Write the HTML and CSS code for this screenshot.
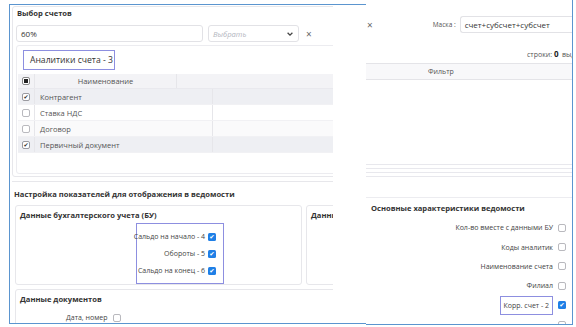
FILE: index.html
```html
<!DOCTYPE html>
<html lang="ru">
<head>
<meta charset="utf-8">
<link rel="stylesheet" href="styles.css">
</head>
<body>
<div class="canvas">
  <section class="shot-left">
    <div class="clip">
      <div class="card acct">
        <h3 class="title">Выбор счетов</h3>
        <div class="fields">
          <div class="input wide">60%</div>
          <div class="input select"><span class="ph">Выбрать</span>
            <svg class="chev" viewBox="0 0 10 10" width="8" height="8"><path d="M2 3.5 L5 6.5 L8 3.5" fill="none" stroke="#444" stroke-width="1.6"/></svg>
          </div>
          <span class="close">×</span>
        </div>
        <div class="tablebox">
          <div class="tag">Аналитики счета - 3</div>
          <div class="tbl">
            <div class="tr head">
              <div class="c-chk"><span class="cb cb-mixed"></span></div>
              <div class="c-name center">Наименование</div>
              <div class="c-rest"></div>
            </div>
            <div class="tr sel">
              <div class="c-chk"><span class="cb cb-on">✔</span></div>
              <div class="c-name2">Контрагент</div>
              <div class="c-rest2"></div>
            </div>
            <div class="tr">
              <div class="c-chk"><span class="cb"></span></div>
              <div class="c-name2">Ставка НДС</div>
              <div class="c-rest2"></div>
            </div>
            <div class="tr alt">
              <div class="c-chk"><span class="cb"></span></div>
              <div class="c-name2">Договор</div>
              <div class="c-rest2"></div>
            </div>
            <div class="tr sel">
              <div class="c-chk"><span class="cb cb-on">✔</span></div>
              <div class="c-name2">Первичный документ</div>
              <div class="c-rest2"></div>
            </div>
          </div>
        </div>
      </div>
      <div class="card settings">
        <h3 class="title">Настройка показателей для отображения в ведомости</h3>
        <div class="subrow">
          <div class="sub bu">
            <h4 class="subtitle">Данные бухгалтерского учета (БУ)</h4>
            <div class="hl-box">
              <div class="opt">Сальдо на начало - 4 <span class="bcb">✔</span></div>
              <div class="opt">Обороты - 5 <span class="bcb">✔</span></div>
              <div class="opt">Сальдо на конец - 6 <span class="bcb">✔</span></div>
            </div>
          </div>
          <div class="sub other">
            <h4 class="subtitle">Данные документов</h4>
          </div>
        </div>
        <div class="sub docs">
          <h4 class="subtitle">Данные документов</h4>
          <div class="opt doc-opt">Дата, номер <span class="cb"></span></div>
        </div>
      </div>
    </div>
  </section>
  <section class="shot-right">
    <div class="mask-row">
      <span class="close rclose">×</span>
      <span class="mask-label">Маска :</span>
      <div class="input mask">счет+субсчет+субсчет</div>
    </div>
    <div class="count">строки: <b>0</b> &nbsp;выделено</div>
    <div class="rhead"><span class="filter">Фильтр</span></div>
    <div class="rlines">
      <div class="ln"></div><div class="ln"></div><div class="ln"></div><div class="ln"></div>
    </div>
    <div class="rcard">
      <h3 class="title">Основные характеристики ведомости</h3>
      <div class="ropts">
        <div class="ropt">Кол-во вместе с данными БУ <span class="cb"></span></div>
        <div class="ropt">Коды аналитик <span class="cb"></span></div>
        <div class="ropt">Наименование счета <span class="cb"></span></div>
        <div class="ropt">Филиал <span class="cb"></span></div>
        <div class="ropt"><span class="hl-small">Корр. счет - 2</span> <span class="bcb">✔</span></div>
        <div class="ropt"><span class="cb"></span></div>
      </div>
    </div>
  </section>
</div>
</body>
</html>
```
FILE: styles.css
```css
* { box-sizing: border-box; }
html, body { margin: 0; padding: 0; background: #fff; }
body {
  width: 576px; height: 327px; overflow: hidden;
  font-family: "Open Sans", "DejaVu Sans", sans-serif;
  font-size: 7.5px; color: #3a3a3a;
}
.canvas { display: flex; align-items: flex-start; }

.shot-left {
  margin: 4px 0 0 9px;
  width: 357px; height: 320px; flex-shrink: 0;
  border-top: 1.5px solid #5b95cf;
  border-left: 1.5px solid #5b95cf;
  border-bottom: 1.5px solid #5b95cf;
  overflow: hidden;
  padding: 1px 0 0 2px;
}
.clip { width: 321px; height: 100%; overflow: hidden; }
.card { border: 1px solid #e7e7eb; border-radius: 3px; }
.acct { width: 326px; height: 171px; padding: 0 3px 0 3px; }
.title { margin: 0; font-size: 7.6px; font-weight: 700; color: #333; line-height: 12px; padding-left: 1px; white-space: nowrap; }
.fields { display: flex; align-items: center; margin-top: 6px; height: 17px; }
.input {
  border: 1px solid #e2e2e6; border-radius: 3px; height: 17px;
  display: flex; align-items: center; padding-left: 4px;
  font-size: 8px; color: #333; white-space: nowrap;
}
.wide { width: 187px; }
.select { width: 91px; margin-left: 5px; justify-content: space-between; padding-right: 4px; }
.ph { font-style: italic; color: #b3b6c0; font-size: 7.6px; }
.close { color: #666; font-size: 10px; margin-left: 7px; line-height: 10px; }
.tablebox {
  margin-top: 3px; height: 129px; width: 330px;
  border: 1px solid #ececf0; border-radius: 3px; padding: 4px 0 0 1px;
}
.tag {
  margin-left: 5px; width: 92px; height: 20px; border: 1px solid #8d8fe0;
  display: flex; align-items: center; padding-left: 6px;
  font-size: 8.6px; color: #333; background: #fff; white-space: nowrap;
}
.tbl { margin-top: 4px; }
.tr { display: flex; height: 16px; align-items: stretch; border-bottom: 1px solid #f1f1f4; }
.tr.head { background: #f3f3f6; height: 15px; border-bottom: 1px solid #e9e9ee; }
.tr.sel { background: #eeeff3; }
.tr.alt { background: #fafafb; }
.c-chk { width: 17px; display: flex; align-items: center; justify-content: center; border-right: 1px solid #e6e6ea; }
.c-name { width: 142px; display: flex; align-items: center; justify-content: center; color: #555; border-right: 1px solid #e6e6ea; }
.c-name2 { width: 178px; display: flex; align-items: center; padding-left: 5px; color: #555; border-right: 1.5px solid #e6e6ea; }
.c-rest, .c-rest2 { flex: 1; }
.cb {
  display: inline-block; width: 8px; height: 8px; border: 1px solid #b9b9be;
  border-radius: 2px; background: #fff; vertical-align: middle;
  font-size: 6px; line-height: 6px; text-align: center; color: #333; flex-shrink: 0;
}
.cb-on { border-color: #9a9aa0; }
.cb-mixed { border-color: #888; position: relative; }
.cb-mixed::after { content: ""; position: absolute; left: 1px; top: 1px; width: 4px; height: 4px; background: #222; }
.bcb {
  display: inline-block; width: 8px; height: 8px; border-radius: 1.5px;
  background: #1f7fe6; color: #fff; font-size: 6.5px; line-height: 8px;
  text-align: center; vertical-align: middle; margin-left: 3px; flex-shrink: 0;
}

.settings { margin-top: 4px; border-left: none; border-right: none; border-radius: 0; width: 340px; padding: 6px 0 0 1px; height: 160px; }
.subrow { display: flex; gap: 4px; margin-top: 5px; margin-left: 2px; }
.sub { border: 1px solid #e7e7eb; border-radius: 3px; padding: 3px 4px 0 4px; }
.subtitle { margin: 0; font-size: 7.6px; font-weight: 700; color: #333; line-height: 12px; white-space: nowrap; }
.bu { width: 287px; height: 80px; flex-shrink: 0; }
.other { width: 60px; height: 80px; flex-shrink: 0; }
.hl-box {
  margin: 2px 0 0 116px; width: 88px; height: 61px; border: 1px solid #8d8fe0;
  display: flex; flex-direction: column; align-items: flex-end; justify-content: space-evenly;
  padding: 0 7px 0 0;
}
.opt { font-size: 7px; color: #444; display: flex; align-items: center; white-space: nowrap; }
.docs { margin: 4px 0 0 2px; height: 40px; width: 330px; }
.doc-opt { margin: 8px 0 0 46px; }
.doc-opt .cb { margin-left: 6px; }

.shot-right {
  width: 207px; height: 325px; flex-shrink: 0;
  border-right: 1.5px solid #5b95cf; border-bottom: 1.5px solid #5b95cf;
  display: flex; flex-direction: column; overflow: hidden;
}
.shot-right > * { flex-shrink: 0; }
.mask-row { display: flex; align-items: center; margin-top: 16px; height: 17px; }
.rclose { margin-left: 1px; }
.mask-label { margin-left: 60px; font-size: 6.5px; color: #555; }
.mask { margin-left: 4px; flex: 1; border-right: none; border-radius: 3px 0 0 3px; font-size: 8px; }
.count { margin-top: 16px; margin-left: 161px; font-size: 7px; color: #555; white-space: nowrap; overflow: hidden; line-height: 10px; height: 10px; }
.count b { color: #222; font-size: 8px; }
.rhead {
  margin-top: 4px; height: 17px; border-top: 1px solid #e4e4e8; border-bottom: 1px solid #e4e4e8;
  background: #f8f8fa; display: flex; align-items: center;
}
.filter { margin-left: 62px; font-size: 7px; color: #555; }
.rlines { margin-top: 84px; display: flex; flex-direction: column; gap: 3px; }
.ln { height: 1px; background: #e8e8ed; }
.rcard { margin-top: 20px; border-top: 1px solid #ececf0; padding: 4px 0 0 4px; }
.ropts { display: flex; flex-direction: column; align-items: flex-end; padding-right: 6px; margin-top: 4px; }
.ropt { height: 19.4px; display: flex; align-items: center; font-size: 7px; color: #444; white-space: nowrap; flex-shrink: 0; }
.ropt .cb { margin-left: 5px; }
.ropt .bcb { margin-left: 5px; }
.hl-small { border: 1px solid #8d8fe0; padding: 4px 3px; }
```
